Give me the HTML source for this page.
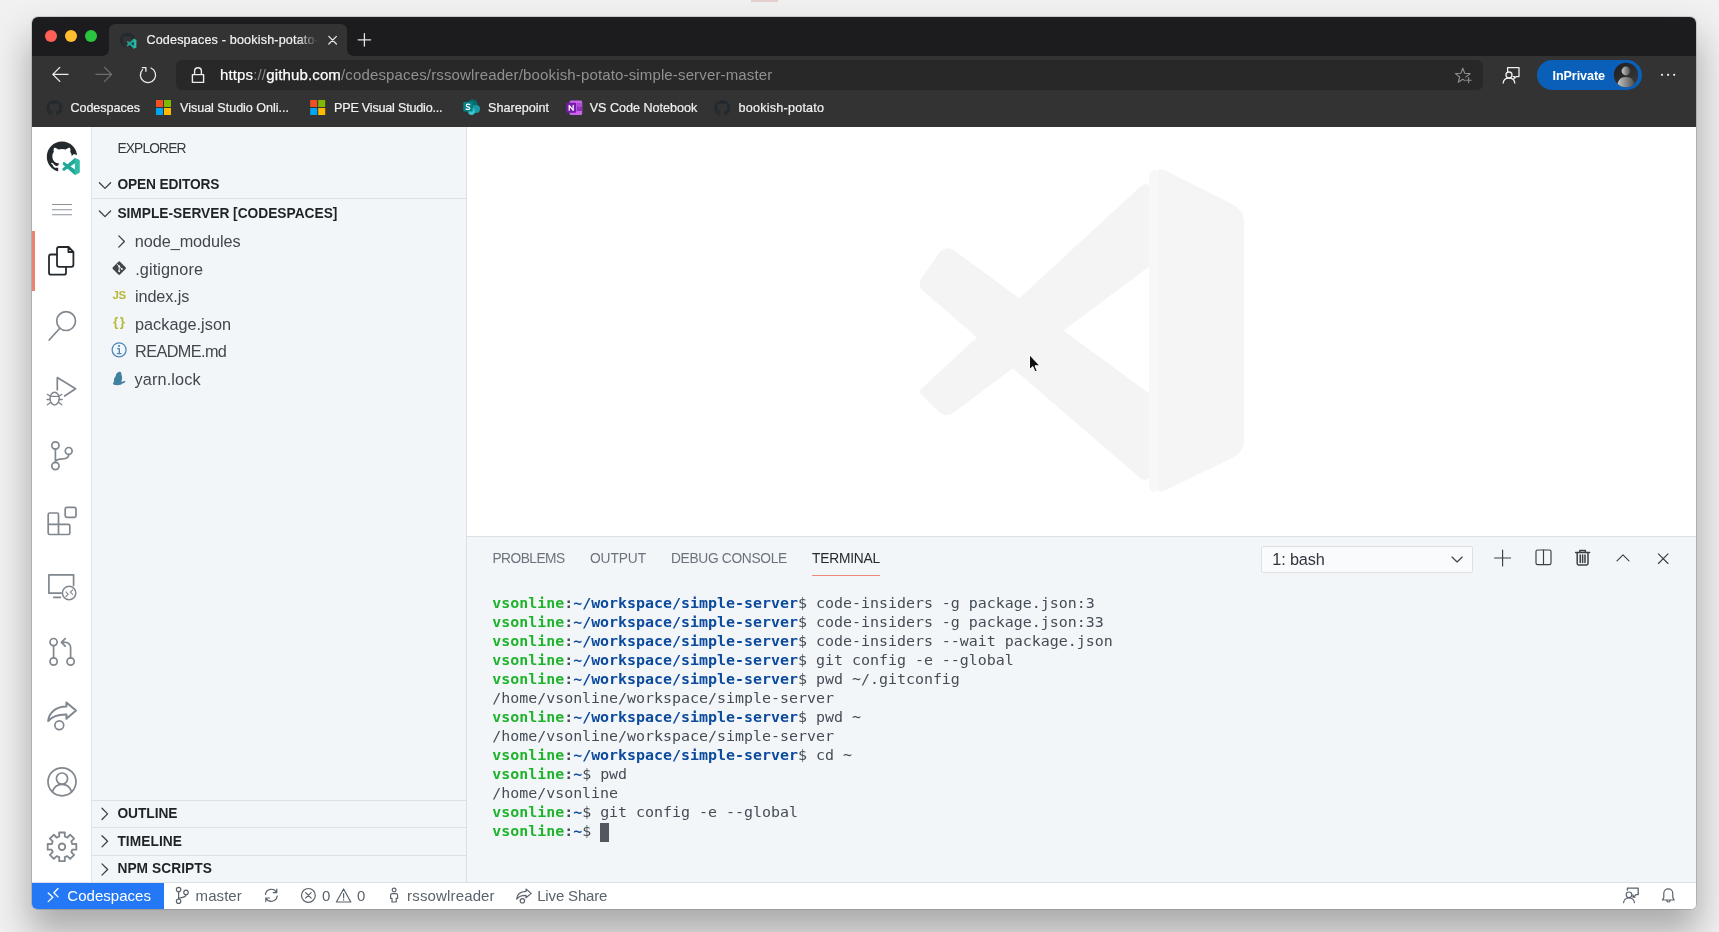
<!DOCTYPE html>
<html><head><meta charset="utf-8"><title>Codespaces - bookish-potato</title>
<style>
*{box-sizing:border-box;margin:0;padding:0}
html,body{width:1719px;height:932px;overflow:hidden}
body{background:#f1f1f1;font-family:"Liberation Sans",sans-serif;position:relative}
#shadow{position:absolute;left:32px;top:17px;width:1664px;height:892px;border-radius:6px;box-shadow:0 22px 36px 3px rgba(0,0,0,.29),0 0 0 1px rgba(0,0,0,.13)}
#win{position:absolute;left:32px;top:17px;width:1664px;height:892px;border-radius:6px 6px 5px 5px;overflow:hidden;background:#fff}
#o{position:absolute;left:-32px;top:-17px;width:1719px;height:932px;will-change:transform}
.b{position:absolute}
.t{position:absolute;white-space:nowrap;line-height:20px}
#term{position:absolute;left:492.2px;top:594px;font-family:"DejaVu Sans Mono","Liberation Mono",monospace;font-size:14.95px;line-height:19px;color:#444d56;white-space:pre}
#term b.g{color:#20b42d}
#term b.u{color:#0b4a9c}
#term b.c{color:#444d56}
#ovl{position:absolute;left:0;top:0}
</style></head><body>
<div class="b" style="left:751px;top:0;width:27px;height:2px;background:#e6cfcf"></div>
<div id="shadow"></div>
<div id="win"><div id="o">
<!-- browser chrome -->
<div class="b" style="left:32px;top:17px;width:1664px;height:39px;background:#1c1c1e"></div>
<div class="b" style="left:32px;top:55.5px;width:1664px;height:71.5px;background:#333333"></div>
<div class="b" style="left:109px;top:24px;width:238px;height:32px;background:#333333;border-radius:6px 6px 0 0"></div>
<div class="b" style="left:103px;top:49.5px;width:6px;height:6px;background:radial-gradient(circle at 0 0,rgba(51,51,51,0) 5.5px,#333 6px)"></div>
<div class="b" style="left:347px;top:49.5px;width:6px;height:6px;background:radial-gradient(circle at 100% 0,rgba(51,51,51,0) 5.5px,#333 6px)"></div>
<div class="b" style="left:176px;top:60px;width:1307px;height:30px;background:#282828;border-radius:6px"></div>
<div class="b" style="left:1537px;top:60px;width:105px;height:30px;background:#0a5fb9;border-radius:15px"></div>
<div class="b" style="left:298px;top:28px;width:28px;height:24px;background:linear-gradient(to right,rgba(51,51,51,0),#333 72%);z-index:2"></div>
<span id="urlt" class="t" style="left:220px;top:64.6px;font-size:15px;color:#919191;letter-spacing:0.145px"><span style="color:#fff;-webkit-text-stroke:0.2px">https</span><span style="color:#8a8a8a">://</span><span style="color:#fff;-webkit-text-stroke:0.25px">github.com</span>/codespaces/rssowlreader/bookish-potato-simple-server-master</span>
<!-- vscode workbench -->
<div class="b" style="left:32px;top:127px;width:60px;height:756px;background:#ffffff"></div>
<div class="b" style="left:91px;top:127px;width:376px;height:756px;background:#f3f6f9;border-left:1px solid #e1e4e8;border-right:1px solid #dcdfe3"></div>
<div class="b" style="left:467px;top:127px;width:1229px;height:409px;background:#ffffff"></div>
<div class="b" style="left:467px;top:536px;width:1229px;height:347px;background:#f3f6f9;border-top:1px solid #dcdfe3"></div>
<div class="b" style="left:32px;top:882px;width:1664px;height:27px;background:#ffffff;border-top:1px solid #dcdfe3"></div>
<div class="b" style="left:32px;top:883px;width:132px;height:26px;background:#2578f5"></div>
<div class="b" style="left:32px;top:231px;width:3px;height:60px;background:#ea8471"></div>
<!-- sidebar separators -->
<div class="b" style="left:92px;top:198px;width:374px;height:1px;background:#dcdfe3"></div>
<div class="b" style="left:92px;top:800px;width:374px;height:1px;background:#dcdfe3"></div>
<div class="b" style="left:92px;top:827px;width:374px;height:1px;background:#dcdfe3"></div>
<div class="b" style="left:92px;top:855px;width:374px;height:1px;background:#dcdfe3"></div>
<!-- panel tab underline and dropdown -->
<div class="b" style="left:812px;top:575px;width:68px;height:1px;background:#ec8a75"></div>
<div class="b" style="left:1261px;top:545.5px;width:211.5px;height:27px;background:#fafbfc;border:1px solid #dde1e6;border-radius:2px"></div>
<span class="t" style="left:112.6px;top:284.6px;font-size:11.5px;font-weight:700;color:#b7b73b;letter-spacing:-0.6px">JS</span>
<span class="t" style="left:113px;top:311.6px;font-size:13.5px;font-weight:700;color:#b7b73b;letter-spacing:1.6px">{}</span>
<span id="tabt" class="t" style="left:146.4px;top:30px;font-size:12.6px;font-weight:400;color:#f2f2f2;-webkit-text-stroke:0.2px;letter-spacing:0.165px">Codespaces - bookish-potato-</span>
<span id="inp" class="t" style="left:1552.5px;top:66px;font-size:12.6px;font-weight:700;color:#ffffff;letter-spacing:-0.083px">InPrivate</span>
<span id="bm1" class="t" style="left:70.4px;top:98px;font-size:12.6px;font-weight:400;color:#f2f2f2;-webkit-text-stroke:0.2px;letter-spacing:-0.044px">Codespaces</span>
<span id="bm2" class="t" style="left:180.0px;top:98px;font-size:12.6px;font-weight:400;color:#f2f2f2;-webkit-text-stroke:0.2px;letter-spacing:-0.034px">Visual Studio Onli...</span>
<span id="bm3" class="t" style="left:334.0px;top:98px;font-size:12.6px;font-weight:400;color:#f2f2f2;-webkit-text-stroke:0.2px;letter-spacing:-0.209px">PPE Visual Studio...</span>
<span id="bm4" class="t" style="left:488.0px;top:98px;font-size:12.6px;font-weight:400;color:#f2f2f2;-webkit-text-stroke:0.2px;letter-spacing:0.008px">Sharepoint</span>
<span id="bm5" class="t" style="left:589.7px;top:98px;font-size:12.6px;font-weight:400;color:#f2f2f2;-webkit-text-stroke:0.2px;letter-spacing:-0.021px">VS Code Notebook</span>
<span id="bm6" class="t" style="left:738.5px;top:98px;font-size:12.6px;font-weight:400;color:#f2f2f2;-webkit-text-stroke:0.2px;letter-spacing:0.228px">bookish-potato</span>
<span id="exp" class="t" style="left:117.4px;top:139px;font-size:13.75px;font-weight:400;color:#33383d;letter-spacing:-0.825px">EXPLORER</span>
<span id="oe" class="t" style="left:117.4px;top:175px;font-size:13.75px;font-weight:700;color:#1f2328;letter-spacing:-0.144px">OPEN EDITORS</span>
<span id="ss" class="t" style="left:117.4px;top:204px;font-size:13.75px;font-weight:700;color:#1f2328;letter-spacing:-0.012px">SIMPLE-SERVER [CODESPACES]</span>
<span id="f0" class="t" style="left:134.8px;top:231px;font-size:16.25px;font-weight:400;color:#41474e;letter-spacing:-0.070px">node_modules</span>
<span id="f1" class="t" style="left:135.2px;top:259px;font-size:16.25px;font-weight:400;color:#41474e;letter-spacing:0.099px">.gitignore</span>
<span id="f2" class="t" style="left:135.0px;top:286px;font-size:16.25px;font-weight:400;color:#41474e;letter-spacing:-0.108px">index.js</span>
<span id="f3" class="t" style="left:135.0px;top:314px;font-size:16.25px;font-weight:400;color:#41474e;letter-spacing:0.020px">package.json</span>
<span id="f4" class="t" style="left:135.0px;top:341px;font-size:16.25px;font-weight:400;color:#41474e;letter-spacing:-0.591px">README.md</span>
<span id="f5" class="t" style="left:134.6px;top:369px;font-size:16.25px;font-weight:400;color:#41474e;letter-spacing:0.126px">yarn.lock</span>
<span id="ol" class="t" style="left:117.4px;top:804px;font-size:13.75px;font-weight:700;color:#1f2328;letter-spacing:-0.040px">OUTLINE</span>
<span id="tl" class="t" style="left:117.4px;top:832px;font-size:13.75px;font-weight:700;color:#1f2328;letter-spacing:0.057px">TIMELINE</span>
<span id="ns" class="t" style="left:117.4px;top:859px;font-size:13.75px;font-weight:700;color:#1f2328;letter-spacing:0.060px">NPM SCRIPTS</span>
<span id="st1" class="t" style="left:67.3px;top:886px;font-size:15px;font-weight:400;color:#ffffff;letter-spacing:0.033px">Codespaces</span>
<span id="st2" class="t" style="left:195.6px;top:886px;font-size:15px;font-weight:400;color:#5a626b;letter-spacing:0.065px">master</span>
<span id="st3" class="t" style="left:322.0px;top:886px;font-size:15px;font-weight:400;color:#5a626b;letter-spacing:-0.344px">0</span>
<span id="st4" class="t" style="left:356.9px;top:886px;font-size:15px;font-weight:400;color:#5a626b;letter-spacing:-0.444px">0</span>
<span id="st5" class="t" style="left:407.1px;top:886px;font-size:15px;font-weight:400;color:#5a626b;letter-spacing:0.150px">rssowlreader</span>
<span id="st6" class="t" style="left:537.2px;top:886px;font-size:15px;font-weight:400;color:#5a626b;letter-spacing:-0.160px">Live Share</span>
<span id="p1" class="t" style="left:492.4px;top:549px;font-size:13.75px;font-weight:400;color:#6a737d;letter-spacing:-0.510px">PROBLEMS</span>
<span id="p2" class="t" style="left:590.0px;top:549px;font-size:13.75px;font-weight:400;color:#6a737d;letter-spacing:-0.097px">OUTPUT</span>
<span id="p3" class="t" style="left:671.0px;top:549px;font-size:13.75px;font-weight:400;color:#6a737d;letter-spacing:-0.318px">DEBUG CONSOLE</span>
<span id="p4" class="t" style="left:812.0px;top:549px;font-size:13.75px;font-weight:400;color:#24292e;letter-spacing:-0.204px">TERMINAL</span>
<span id="dd" class="t" style="left:1272.3px;top:549px;font-size:16.25px;font-weight:400;color:#2f363d;letter-spacing:-0.156px">1: bash</span>
<div id="term"><b class="g">vsonline</b><b class="c">:</b><b class="u">~/workspace/simple-server</b>$ code-insiders -g package.json:3
<b class="g">vsonline</b><b class="c">:</b><b class="u">~/workspace/simple-server</b>$ code-insiders -g package.json:33
<b class="g">vsonline</b><b class="c">:</b><b class="u">~/workspace/simple-server</b>$ code-insiders --wait package.json
<b class="g">vsonline</b><b class="c">:</b><b class="u">~/workspace/simple-server</b>$ git config -e --global
<b class="g">vsonline</b><b class="c">:</b><b class="u">~/workspace/simple-server</b>$ pwd ~/.gitconfig
/home/vsonline/workspace/simple-server
<b class="g">vsonline</b><b class="c">:</b><b class="u">~/workspace/simple-server</b>$ pwd ~
/home/vsonline/workspace/simple-server
<b class="g">vsonline</b><b class="c">:</b><b class="u">~/workspace/simple-server</b>$ cd ~
<b class="g">vsonline</b><b class="c">:</b><b class="u">~</b>$ pwd
/home/vsonline
<b class="g">vsonline</b><b class="c">:</b><b class="u">~</b>$ git config -e --global
<b class="g">vsonline</b><b class="c">:</b><b class="u">~</b>$ </div>
<div class="b" style="left:600px;top:823px;width:9px;height:19px;background:#53575f"></div>
<svg id="ovl" width="1719" height="932" viewBox="0 0 1719 932" fill="none" stroke-linecap="round" stroke-linejoin="round">
<defs><linearGradient id="av" x1="0" y1="0" x2="1" y2="1"><stop offset="0" stop-color="#1d1d1f"/><stop offset="1" stop-color="#3c3c3e"/></linearGradient><linearGradient id="avp" x1="0" y1="0" x2="1" y2="0"><stop offset="0" stop-color="#c8c8c8"/><stop offset="1" stop-color="#4a4a4a"/></linearGradient></defs>
<circle cx="51" cy="36" r="6" fill="#fe5f57"/><circle cx="71" cy="36" r="6" fill="#febc2e"/><circle cx="91" cy="36" r="6" fill="#2bc43f"/>
<path transform="translate(120.00,32.80) scale(0.9375)" fill="#24292e" d="M8 0C3.58 0 0 3.58 0 8c0 3.54 2.29 6.53 5.47 7.59.4.07.55-.17.55-.38 0-.19-.01-.82-.01-1.49-2.01.37-2.53-.49-2.69-.94-.09-.23-.48-.94-.82-1.13-.28-.15-.68-.52-.01-.53.63-.01 1.08.58 1.23.82.72 1.21 1.87.87 2.33.66.07-.52.28-.87.51-1.07-1.78-.2-3.64-.89-3.64-3.95 0-.87.31-1.59.82-2.15-.08-.2-.36-1.02.08-2.12 0 0 .67-.21 2.2.82.64-.18 1.32-.27 2-.27.68 0 1.36.09 2 .27 1.53-1.04 2.2-.82 2.2-.82.44 1.1.16 1.92.08 2.12.51.56.82 1.27.82 2.15 0 3.07-1.87 3.75-3.65 3.95.29.25.54.73.54 1.48 0 1.07-.01 1.93-.01 2.2 0 .21.15.46.55.38A8.013 8.013 0 0016 8c0-4.42-3.58-8-8-8z"/>
<g transform="translate(126.80,38.70) scale(0.0960,0.1000)"><path fill="#1fa899" d="M2,63 L70,1 L76,4 L76,28 L12,76 Q9,78 6,75 L2,71 Q-1,67 2,63z"/><path fill="#1fa899" d="M2,37 L6,25 Q9,22 12,24 L76,72 L76,96 L70,99 L2,37z"/><path fill="#2bb9a6" d="M72,1 Q74,0 77,1 L96,10 Q100,12 100,17 L100,83 Q100,88 96,90 L77,99 Q74,100 72,99z"/></g>
<path stroke="#e4e4e4" stroke-width="1.3" d="M328.8,36.4 L336.4,44 M336.4,36.4 L328.8,44"/>
<path stroke="#e4e4e4" stroke-width="1.3" d="M364.4,33.6 V46 M358.2,39.8 H370.6"/>
<path stroke="#ececec" stroke-width="1.3" d="M52.8,74.4 H68 M59.8,67.4 L52.8,74.4 L59.8,81.4"/>
<path stroke="#6f6f6f" stroke-width="1.3" d="M96,74.4 H111.6 M104.6,67.4 L111.6,74.4 L104.6,81.4"/>
<path stroke="#ececec" stroke-width="1.3" d="M151,68 A7.6,7.6 0 1 1 142.6,69.6 M142.3,67.7 H145.9 V71.3"/>
<path stroke="#ececec" stroke-width="1.4" d="M192.4,74.6 H203.6 V82.4 H192.4z M194.6,74.4 V71.2 A3.4,3.4 0 0 1 201.4,71.2 V74.4"/>
<path stroke="#8e8e8e" stroke-width="1.1" d="M1462.8,68.2 L1464.7,73.3 L1470.2,73.6 L1465.9,77.0 L1467.4,82.3 L1462.8,79.3 L1458.2,82.3 L1459.7,77.0 L1455.4,73.6 L1460.9,73.3z"/>
<circle cx="1468.6" cy="80.2" r="3.7" fill="#282828"/><path stroke="#8e8e8e" stroke-width="1.1" d="M1468.6,77.6 V82.8 M1466,80.2 H1471.2"/>
<path stroke="#f0f0f0" stroke-width="1.3" d="M1507.6,71.5 V67.6 H1519 V76.6 H1516.3 L1513.6,79 M1513.2,76.6 L1514.5,76.6"/>
<circle cx="1509" cy="75" r="3" stroke="#f0f0f0" stroke-width="1.3"/>
<path stroke="#f0f0f0" stroke-width="1.3" d="M1503.2,83 C1503.6,79.6 1506,78.2 1509,78.2 C1512,78.2 1514.4,79.6 1514.8,83"/>
<circle cx="1626" cy="75" r="12.2" fill="url(#av)"/>
<clipPath id="avc"><circle cx="1626" cy="75" r="12.2"/></clipPath>
<g clip-path="url(#avc)"><circle cx="1626" cy="71" r="4.4" fill="url(#avp)"/><path fill="url(#avp)" d="M1617,88 C1617,80 1621,77 1626,77 C1631,77 1635,80 1635,88z"/></g>
<circle cx="1662" cy="74.8" r="1.1" fill="#f0f0f0"/><circle cx="1668.1" cy="74.8" r="1.1" fill="#f0f0f0"/><circle cx="1674.2" cy="74.8" r="1.1" fill="#f0f0f0"/>
<path transform="translate(46.30,99.90) scale(1.0000)" fill="#24292e" d="M8 0C3.58 0 0 3.58 0 8c0 3.54 2.29 6.53 5.47 7.59.4.07.55-.17.55-.38 0-.19-.01-.82-.01-1.49-2.01.37-2.53-.49-2.69-.94-.09-.23-.48-.94-.82-1.13-.28-.15-.68-.52-.01-.53.63-.01 1.08.58 1.23.82.72 1.21 1.87.87 2.33.66.07-.52.28-.87.51-1.07-1.78-.2-3.64-.89-3.64-3.95 0-.87.31-1.59.82-2.15-.08-.2-.36-1.02.08-2.12 0 0 .67-.21 2.2.82.64-.18 1.32-.27 2-.27.68 0 1.36.09 2 .27 1.53-1.04 2.2-.82 2.2-.82.44 1.1.16 1.92.08 2.12.51.56.82 1.27.82 2.15 0 3.07-1.87 3.75-3.65 3.95.29.25.54.73.54 1.48 0 1.07-.01 1.93-.01 2.2 0 .21.15.46.55.38A8.013 8.013 0 0016 8c0-4.42-3.58-8-8-8z"/>
<rect x="156" y="100" width="7.0" height="7.0" fill="#f25022"/><rect x="164.0" y="100" width="7.0" height="7.0" fill="#7fba00"/><rect x="156" y="108.0" width="7.0" height="7.0" fill="#00a4ef"/><rect x="164.0" y="108.0" width="7.0" height="7.0" fill="#ffb900"/>
<rect x="310.2" y="100" width="7.0" height="7.0" fill="#f25022"/><rect x="318.2" y="100" width="7.0" height="7.0" fill="#7fba00"/><rect x="310.2" y="108.0" width="7.0" height="7.0" fill="#00a4ef"/><rect x="318.2" y="108.0" width="7.0" height="7.0" fill="#ffb900"/>
<circle cx="472.5" cy="104.5" r="5" fill="#036c70"/><circle cx="476" cy="109" r="4" fill="#1a9ba1"/><circle cx="471.5" cy="111.5" r="3.4" fill="#37c6d0"/><rect x="463.3" y="102" width="9.4" height="9.4" rx="1" fill="#038387"/>
<path stroke="#fff" stroke-width="1.2" d="M469.8,104.6 C468.5,103.8 466.3,104 466.3,105.5 C466.3,107.2 469.8,106.5 469.8,108.2 C469.8,109.6 467.4,109.8 466.2,108.9"/>
<rect x="569.5" y="100.5" width="12.7" height="14.5" rx="1.5" fill="#ca64ea"/><rect x="577" y="103" width="5.2" height="4" fill="#ae4bd5"/><rect x="577" y="107" width="5.2" height="4" fill="#9332bf"/><rect x="566.2" y="102.8" width="10" height="10" rx="1" fill="#7719aa"/>
<path stroke="#fff" stroke-width="1.2" d="M569.2,110.3 V105.3 L573.2,110.3 V105.3"/>
<path transform="translate(714.20,99.90) scale(1.0000)" fill="#24292e" d="M8 0C3.58 0 0 3.58 0 8c0 3.54 2.29 6.53 5.47 7.59.4.07.55-.17.55-.38 0-.19-.01-.82-.01-1.49-2.01.37-2.53-.49-2.69-.94-.09-.23-.48-.94-.82-1.13-.28-.15-.68-.52-.01-.53.63-.01 1.08.58 1.23.82.72 1.21 1.87.87 2.33.66.07-.52.28-.87.51-1.07-1.78-.2-3.64-.89-3.64-3.95 0-.87.31-1.59.82-2.15-.08-.2-.36-1.02.08-2.12 0 0 .67-.21 2.2.82.64-.18 1.32-.27 2-.27.68 0 1.36.09 2 .27 1.53-1.04 2.2-.82 2.2-.82.44 1.1.16 1.92.08 2.12.51.56.82 1.27.82 2.15 0 3.07-1.87 3.75-3.65 3.95.29.25.54.73.54 1.48 0 1.07-.01 1.93-.01 2.2 0 .21.15.46.55.38A8.013 8.013 0 0016 8c0-4.42-3.58-8-8-8z"/>
<path transform="translate(46.80,141.60) scale(1.9000)" fill="#24292e" d="M8 0C3.58 0 0 3.58 0 8c0 3.54 2.29 6.53 5.47 7.59.4.07.55-.17.55-.38 0-.19-.01-.82-.01-1.49-2.01.37-2.53-.49-2.69-.94-.09-.23-.48-.94-.82-1.13-.28-.15-.68-.52-.01-.53.63-.01 1.08.58 1.23.82.72 1.21 1.87.87 2.33.66.07-.52.28-.87.51-1.07-1.78-.2-3.64-.89-3.64-3.95 0-.87.31-1.59.82-2.15-.08-.2-.36-1.02.08-2.12 0 0 .67-.21 2.2.82.64-.18 1.32-.27 2-.27.68 0 1.36.09 2 .27 1.53-1.04 2.2-.82 2.2-.82.44 1.1.16 1.92.08 2.12.51.56.82 1.27.82 2.15 0 3.07-1.87 3.75-3.65 3.95.29.25.54.73.54 1.48 0 1.07-.01 1.93-.01 2.2 0 .21.15.46.55.38A8.013 8.013 0 0016 8c0-4.42-3.58-8-8-8z"/>
<path fill="#fff" d="M60,166 L74,154 L82,157 L82,177 L74,178 L60,168z"/>
<g transform="translate(62.20,158.00) scale(0.1760,0.1680)"><path fill="#1fa899" d="M2,63 L70,1 L76,4 L76,28 L12,76 Q9,78 6,75 L2,71 Q-1,67 2,63z"/><path fill="#1fa899" d="M2,37 L6,25 Q9,22 12,24 L76,72 L76,96 L70,99 L2,37z"/><path fill="#2ebca7" d="M72,1 Q74,0 77,1 L96,10 Q100,12 100,17 L100,83 Q100,88 96,90 L77,99 Q74,100 72,99z"/></g>
<path stroke="#8b929a" stroke-width="1.1" stroke-linecap="butt" d="M52,204.5 H72 M52,209.7 H72 M52,214.8 H72"/>
<g stroke="#24292e" stroke-width="1.8">
<path d="M56.6,254.5 H51 a2,2 0 0 0 -2,2 V272.7 a2,2 0 0 0 2,2 H64 a2,2 0 0 0 2,-2 V267.3"/>
<path d="M59,247 H68.6 L73.4,251.8 V264.8 a2,2 0 0 1 -2,2 H59 a2,2 0 0 1 -2,-2 V249 a2,2 0 0 1 2,-2z M68.4,247.2 V252 H73.2"/>
</g>
<g stroke="#80878f" stroke-width="1.7">
<circle cx="66.1" cy="321.1" r="9.4"/><path d="M59.8,328.2 L49.2,340"/>
<path d="M57.3,389.8 V377.6 L75.6,388.7 L64.6,396"/>
<ellipse cx="54.6" cy="398.6" rx="4.6" ry="6.3" stroke-width="1.5"/>
<path stroke-width="1.3" d="M50.4,396.4 H58.8 M47.4,394.4 L50.2,396 M47,399.5 H50 M47.4,404.8 L50.4,402.6 M61.8,394.4 L59,396 M62.2,399.5 H59.2 M61.8,404.8 L58.8,402.6"/>
<circle cx="55.4" cy="445.5" r="3.6"/><circle cx="55.4" cy="466" r="3.6"/><circle cx="68.7" cy="450.9" r="3.4"/>
<path d="M55.4,449.2 V462.3 M68.7,454.4 C68.7,458.6 64.5,458.9 60.5,459.2 C57.6,459.4 55.4,460.4 55.4,462.2"/>
<path d="M49.7,513 H57 a1.5,1.5 0 0 1 1.5,1.5 V524.3 H68.3 a1.5,1.5 0 0 1 1.5,1.5 V533 a1.5,1.5 0 0 1 -1.5,1.5 H49.7 a1.5,1.5 0 0 1 -1.5,-1.5 V514.5 a1.5,1.5 0 0 1 1.5,-1.5z M48.2,524.3 H58.5 V534.5"/>
<rect x="65.2" y="507.3" width="10.8" height="10" rx="1.6"/>
<path d="M73.6,585.4 V574.8 H48.9 V593.2 H61.2 M53.8,597.4 H60.4"/>
<circle cx="69.1" cy="593" r="6.7" stroke-width="1.5"/>
<path stroke-width="1.1" d="M65.9,591.9 L68.2,594.3 L65.9,596.7 M72.7,589.9 L70.4,592.2 L72.7,594.4"/>
<circle cx="53.6" cy="642.1" r="3.6"/><circle cx="53.6" cy="661.5" r="3.6"/><circle cx="70.6" cy="661.5" r="3.6"/>
<path d="M53.6,645.8 V657.8 M70.6,657.8 V647.4 a5,5 0 0 0 -5,-5 H61.6 M65.2,638.6 L61.4,642.4 L65.2,646.2"/>
<path stroke-width="2" d="M66.4,702.4 L76,710.5 L66.4,718.8 V714.4 C58,714.2 52,716.5 48.2,721 C49,712.5 55.5,706.8 66.4,706.6z"/>
<circle cx="59.3" cy="725.3" r="4.4"/>
<circle cx="62" cy="781.8" r="14"/><circle cx="62" cy="778.6" r="5.6"/><path d="M52.4,791.8 C54,786.6 58,784.3 62,784.3 C66,784.3 70,786.6 71.6,791.8"/>
<path stroke-width="1.8" d="M59.26,836.46 L59.15,832.48 L64.85,832.48 L64.74,836.46 L67.37,837.55 L70.11,834.66 L74.14,838.69 L71.25,841.43 L72.34,844.06 L76.32,843.95 L76.32,849.65 L72.34,849.54 L71.25,852.17 L74.14,854.91 L70.11,858.94 L67.37,856.05 L64.74,857.14 L64.85,861.12 L59.15,861.12 L59.26,857.14 L56.63,856.05 L53.89,858.94 L49.86,854.91 L52.75,852.17 L51.66,849.54 L47.68,849.65 L47.68,843.95 L51.66,844.06 L52.75,841.43 L49.86,838.69 L53.89,834.66 L56.63,837.55z"/><circle cx="62" cy="846.8" r="3.3" stroke-width="1.8"/>
</g>
<g stroke="#3b4045" stroke-width="1.3">
<path d="M99.4,182.8 L105,188.4 L110.6,182.8"/><path d="M99.4,211 L105,216.6 L110.6,211"/>
<path d="M118.8,235.9 L124.4,241.5 L118.8,247.1"/>
<path d="M102,808.3 L107.6,813.9 L102,819.5"/>
<path d="M102,835.6999999999999 L107.6,841.3 L102,846.9"/>
<path d="M102,863.9 L107.6,869.5 L102,875.1"/>
</g>
<rect x="114.1" y="263" width="10.2" height="10.2" rx="1.2" transform="rotate(45 119.2 268.1)" fill="#41464b"/>
<path stroke="#f3f6f9" stroke-width="1" d="M117.3,264.4 L119.2,266.3 V271 M119.4,266.6 L121.6,268.8"/><circle cx="119.2" cy="271.2" r="1" fill="#f3f6f9"/><circle cx="121.8" cy="268.9" r="1" fill="#f3f6f9"/><circle cx="119.2" cy="266.3" r="1" fill="#f3f6f9"/>
<circle cx="119.1" cy="349.8" r="7" stroke="#4f87b8" stroke-width="1.3"/><circle cx="119" cy="346" r="1.1" fill="#4f87b8"/><path stroke="#4f87b8" stroke-width="1.4" d="M117.6,348.6 H119.3 V353.4 M117.4,353.6 H121"/>
<path fill="#3f819e" d="M118.8,372 C120.6,371.4 121.6,372.6 121.4,374.4 C122.6,376.6 122.2,379.6 121.2,381.6 C122.8,382 124.4,381.4 125.4,380.8 C125.8,381.6 124.4,383.4 121.8,383.8 C121.6,384.8 119.6,385.2 117.2,385.2 C114.6,385.2 112.8,384.8 113,383.6 C113.2,382.4 114.2,382 114,380.6 C113.8,378.8 114.6,377.2 115.8,376.2 C115.6,374.6 116.6,372.8 118.8,372z"/>
<g stroke="#3b4045" stroke-width="1.15">
<path d="M1452,557 L1457.1,562 L1462.2,557"/>
<path d="M1502.6,550 V566 M1494.6,558 H1510.6"/>
<rect x="1536" y="550" width="15" height="14.6" rx="1.6"/><path d="M1543.5,550 V564.6"/>
<path d="M1575.6,552.6 H1589.6 M1579.8,552.4 V550.4 H1585.4 V552.4 M1577.2,552.8 V563.6 a1.4,1.4 0 0 0 1.4,1.4 H1586.6 a1.4,1.4 0 0 0 1.4,-1.4 V552.8 M1580.2,555 V562.6 M1582.6,555 V562.6 M1585,555 V562.6" stroke-width="1.5"/>
<path d="M1617,560.8 L1623,554.8 L1629,560.8"/>
<path d="M1658.4,553.9 L1668,563.5 M1668,553.9 L1658.4,563.5"/>
</g>
<path stroke="#fff" stroke-width="1.3" d="M48.2,893 L52.8,897.3 L48.2,901.6 M58,888.5 L53.9,892.7 L58,896.9"/>
<g stroke="#5a626b" stroke-width="1.2">
<circle cx="178.6" cy="889.6" r="2.2"/><circle cx="178.6" cy="901.2" r="2.2"/><circle cx="186" cy="892.4" r="2.2"/><path d="M178.6,891.8 V899 M186,894.6 C186,897.4 183,897.4 181,897.6 C179.6,897.8 178.6,898.4 178.6,899"/>
<path d="M265.4,894.4 A6,6 0 0 1 276.6,892.4 M277.2,896.2 A6,6 0 0 1 266,898.2 M276.8,889 V892.6 H273.2 M265.8,901.6 V898 H269.4"/>
<circle cx="308.4" cy="895.4" r="6.9"/><path d="M305.6,892.6 L311.2,898.2 M311.2,892.6 L305.6,898.2"/>
<path d="M343.6,889 L350.8,902 H336.4z M343.6,893.6 V897.8 M343.6,899.6 V899.9"/>
<circle cx="394.1" cy="890" r="1.9"/><path d="M392.2,893.6 H396 a1.6,1.6 0 0 1 1.6,1.6 V898.4 H396.2 V902 H392 V898.4 H390.6 V895.2 a1.6,1.6 0 0 1 1.6,-1.6z"/>
<path d="M526,889 L531.2,893.4 L526,897.8 V895.4 C521.6,895.3 518.6,896.6 516.6,899 C517,894.5 520.4,891.6 526,891.4z"/><circle cx="522.4" cy="900.8" r="2.2"/>
<path d="M1627.4,890 V888.2 H1638.2 V894.6 H1636 L1633.6,897 M1633,895 V897.2 H1635" stroke-width="1.3"/><circle cx="1629" cy="894.8" r="2.8"/><path d="M1623.6,902.6 C1624,899.4 1626.2,898 1629,898 C1631.8,898 1634,899.4 1634.4,902.6"/>
<path d="M1662.4,900 H1674.2 L1672.8,897.6 V893.4 a4.5,4.5 0 0 0 -9,0 V897.6z M1666.8,900.4 a1.6,1.6 0 0 0 3.2,0"/>
</g>
<g fill="#f4f4f4" stroke="none">
<path d="M921,389 L1141,186 Q1150,180 1150,192 L1150,266 L953,413 Q945,418 938,411 L921,394 Q919,391 921,389z"/>
<path d="M921,279 L940,252 Q946,245 955,251 L1150,394 L1150,470 Q1150,484 1140,478 L922,290 Q918,284 921,279z"/>
<rect x="1149" y="170" width="10" height="322" rx="5" fill="#f8f8f8"/><path fill="#f5f5f5" d="M1158,172 Q1158,168 1164,170 L1232,204 Q1244,210 1244,222 L1244,440 Q1244,452 1232,458 L1164,491 Q1158,493 1158,489z"/>
</g>
<path fill="#111" stroke="#fff" stroke-width="1" stroke-linejoin="miter" d="M1029.5,355 V369.6 L1032.8,366.6 L1035,371.8 L1037.2,370.8 L1035,365.8 H1039.6z"/>
</svg>
</div></div>
</body></html>
